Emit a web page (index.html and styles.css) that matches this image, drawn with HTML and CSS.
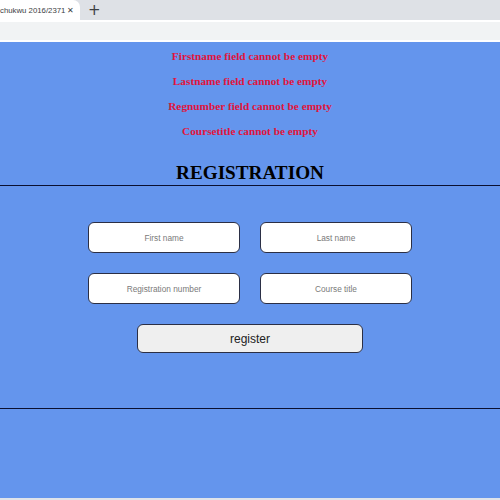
FILE: index.html
```
<!DOCTYPE html>
<html>
<head>
<meta charset="utf-8">
<title>Registration</title>
<link rel="stylesheet" href="styles.css">
</head>
<body>
<div class="chrome">
  <div class="tabbar">
    <div class="tab">
      <span class="tab-title">chukwu 2016/2371</span>
      <span class="tab-close">✕</span>
    </div>
    <span class="tab-new">+</span>
  </div>
  <div class="toolbar"></div>
</div>
<main class="page">
  <div class="errors">
    <p class="error">Firstname field cannot be empty</p>
    <p class="error">Lastname field cannot be empty</p>
    <p class="error">Regnumber field cannot be empty</p>
    <p class="error">Coursetitle cannot be empty</p>
  </div>
  <h3 class="title">REGISTRATION</h3>
  <form class="form">
    <div class="grid">
      <input class="field" type="text" placeholder="First name">
      <input class="field" type="text" placeholder="Last name">
      <input class="field" type="text" placeholder="Registration number">
      <input class="field" type="text" placeholder="Course title">
    </div>
    <button class="submit" type="button">register</button>
  </form>
</main>
<div class="bottom-edge"></div>
</body>
</html>
```
FILE: styles.css
```
* { box-sizing: border-box; }
html, body { margin: 0; padding: 0; }
body {
  width: 500px;
  height: 500px;
  overflow: hidden;
  font-family: "Liberation Serif", "Times New Roman", serif;
  background: #6495ed;
}
.chrome { background: #fff; }
.tabbar {
  height: 20px;
  background: #dee1e6;
  display: flex;
  align-items: stretch;
}
.tab {
  width: 80px;
  background: #fff;
  border-top-right-radius: 7px;
  display: flex;
  align-items: center;
}
.tab-title {
  font-family: "Liberation Sans", Arial, sans-serif;
  font-size: 7.8px;
  color: #3c4043;
  white-space: nowrap;
  width: 66px;
  flex: none;
}
.tab-close {
  font-family: "DejaVu Sans", sans-serif;
  font-size: 8px;
  font-weight: bold;
  color: #3c4043;
  margin-left: 1px;
}
.tab-new {
  font-family: "DejaVu Sans", sans-serif;
  font-size: 15px;
  color: #3c4043;
  margin-left: 8px;
  line-height: 20px;
}
.toolbar {
  height: 22px;
  border-top: 2px solid #fff;
  border-bottom: 2px solid #fff;
  background: #f1f3f4;
}
.page {
  background: #6495ed;
  height: 456px;
  padding-top: 2px;
}
.errors { text-align: center; }
.error {
  margin: 0;
  font-size: 11.3px;
  font-weight: bold;
  line-height: 25px;
  color: #e0143c;
}
.title {
  margin: 17px 0 0;
  font-size: 19.2px;
  line-height: 24px;
  font-weight: bold;
  text-align: center;
  color: #000;
  border-bottom: 1px solid #0b1030;
}
.form {
  padding: 36px 0 55px;
  display: flex;
  flex-direction: column;
  align-items: center;
  gap: 20px;
  border-bottom: 1px solid #0b1030;
}
.grid {
  display: grid;
  grid-template-columns: 152px 152px;
  column-gap: 20px;
  row-gap: 20px;
}
.field {
  height: 31px;
  border: 1px solid #2b2f45;
  border-radius: 6px;
  background: #fff;
  text-align: center;
  font-family: "Liberation Sans", Arial, sans-serif;
  font-size: 8.3px;
  padding: 0;
}
.field::placeholder { color: #7a7a7a; }
.submit {
  width: 226px;
  height: 29px;
  border: 1px solid #2b2f45;
  border-radius: 6px;
  background: #efefef;
  font-family: "Liberation Sans", Arial, sans-serif;
  font-size: 12px;
  color: #222;
  padding: 0;
}
.bottom-edge {
  height: 2px;
  background: #dfe3ea;
}
```
